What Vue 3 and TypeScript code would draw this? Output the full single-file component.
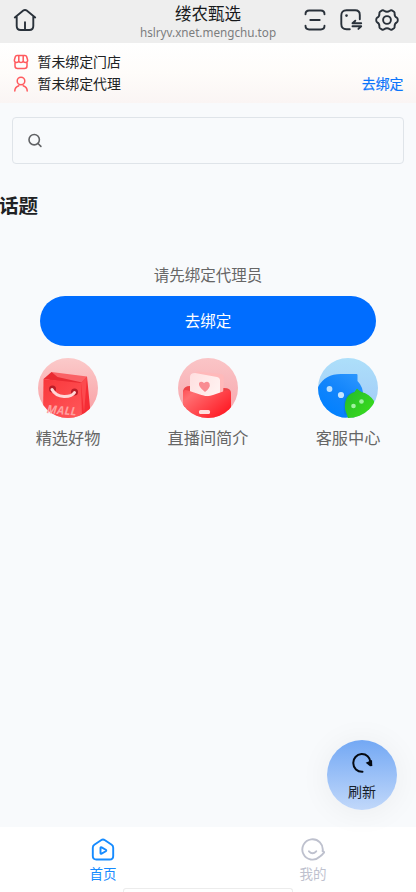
<script setup lang="ts">
interface Feature {
  id: 'mall' | 'live' | 'service'
  label: string
}

const features: Feature[] = [
  { id: 'mall', label: '精选好物' },
  { id: 'live', label: '直播间简介' },
  { id: 'service', label: '客服中心' },
]
</script>

<template>
  <div class="page">
    <header class="browser-bar">
      <svg class="home" viewBox="0 0 24 24" width="24" height="24">
        <path d="M1.800 9.400 10.300 2.600q1.700-1.300 3.400 0l8.500 6.800M3.700 8.300v9.700q0 4 4 4h8.600q4 0 4-4V8.300M12 14.200v7.400" />
      </svg>
      <div class="site">
        <div class="site-title">缕农甄选</div>
        <div class="site-url">hslryv.xnet.mengchu.top</div>
      </div>
      <div class="tools">
        <svg viewBox="0 0 24 24" width="24" height="24">
          <path d="M2.500 6.200q0-3.700 3.700-3.700h11.600q3.700 0 3.700 3.700M2.500 17.800q0 3.700 3.700 3.700h11.600q3.700 0 3.700-3.700M7.300 12h9.400" />
        </svg>
        <svg viewBox="0 0 24 24" width="24" height="24">
          <path d="M10.800 21.200H7.500q-5.200 0-5.200-5.200V7.500q0-5.200 5.200-5.200h8.700q4.600 0 4.600 4.600v4.300M22.200 15.200h-8.700l2.800-2.500M13.500 18.200h8.700l-2.800 2.700" />
          <circle class="dot" cx="7.500" cy="7.600" r="1.300" />
        </svg>
        <svg viewBox="0 0 24 24" width="24" height="24">
          <path d="M7.100 2.400Q8.200 2 9.100 2.800q2.900 2 5.800 0 .9-.8 2-.4l2.100 1.300q.8.700.6 1.800-.2 3 2.200 4.200 1 .5 1 2.300t-1 2.300q-2.400 1.200-2.200 4.200.2 1.100-.6 1.800l-2.100 1.300q-1.100.4-2-.4-2.900-2-5.800 0-.9.800-2 .4L5 20.300q-.8-.7-.6-1.800.2-3-2.200-4.200-1-.5-1-2.300t1-2.300Q4.600 8.500 4.400 5.500 4.200 4.400 5 3.700Z" />
          <circle cx="12" cy="12" r="3.900" />
        </svg>
      </div>
    </header>

    <section class="binding">
      <div class="binding-row">
        <svg viewBox="0 0 16 16" width="16" height="16">
          <path d="M4 1.500h8q1.300 0 1.700 1.200L14.600 6v1q-.3 1.500-2.200 1.500T10.200 7q-.4 1.500-2.200 1.500T5.800 7q-.4 1.500-2.200 1.500T1.400 7V6l.9-3.300Q2.700 1.500 4 1.500ZM5.800 7V1.700M10.200 7V1.700M2 8.400V12q0 2.500 2.500 2.500h7Q14 14.500 14 12V8.400" />
        </svg>
        <span>暂未绑定门店</span>
      </div>
      <div class="binding-row">
        <svg viewBox="0 0 16 16" width="16" height="16">
          <circle cx="8" cy="5" r="3.800" />
          <path d="M1.800 15q0-3.900 4-5.200M14.200 15q0-3.900-4-5.200" />
        </svg>
        <span>暂未绑定代理</span>
        <a class="bind-link">去绑定</a>
      </div>
    </section>

    <main class="content">
      <div class="search">
        <svg viewBox="0 0 16 16" width="16" height="16">
          <circle cx="7.200" cy="6.700" r="5.200" />
          <path d="m11 10.500 2.900 2.900" />
        </svg>
      </div>
      <h2 class="topic">话题</h2>
      <p class="prompt">请先绑定代理员</p>
      <button class="bind-button">去绑定</button>

      <nav class="features">
        <div v-for="item in features" :key="item.id" class="feature">
          <svg v-if="item.id === 'mall'" class="feature-icon" viewBox="0 0 60 60" width="60" height="60">
            <defs>
              <linearGradient id="mall-bg" x2="0" y2="1"><stop stop-color="#fbcaca" /><stop offset="1" stop-color="#f99ca1" /></linearGradient>
              <linearGradient id="bag" x1="0" x2=".8" y2="1"><stop stop-color="#f9373b" /><stop offset="1" stop-color="#ff5558" /></linearGradient>
              <clipPath id="mall-clip"><circle cx="30" cy="30" r="30" /></clipPath>
            </defs>
            <g clip-path="url(#mall-clip)">
              <path fill="url(#mall-bg)" d="M0 0h60v60H0z" />
              <path fill="#fa6266" d="m13.500 14 35.500 4.500-5 6-31-2.500z" />
              <path fill="#e92b32" d="m13.500 14 6 5 24.500 5.500-1 2L5.500 21z" />
              <path fill="#f52d35" d="m49 18.500 3.500 36L43 60V25z" />
              <path fill="#fc4a4e" d="m49 18.500-6 6.500 3 30z" />
              <path fill="url(#bag)" d="m5.500 21 37.500 4 1 35H5z" />
              <circle cx="14.500" cy="31" r="3.500" fill="#b91d28" />
              <circle cx="36.500" cy="34" r="3.500" fill="#b91d28" />
              <path d="M14 31.500q3.500 6.500 12 7 8 .2 10.500-4" fill="none" stroke="#ffd7d7" stroke-width="3" stroke-linecap="round" />
            </g>
            <text class="mall-word" x="8.500" y="55" transform="rotate(5 8.500 55)">MALL</text>
          </svg>

          <svg v-else-if="item.id === 'live'" class="feature-icon" viewBox="0 0 60 60" width="60" height="60">
            <defs>
              <linearGradient id="live-bg" x2="0" y2="1"><stop stop-color="#fac5c7" /><stop offset="1" stop-color="#f7a4aa" /></linearGradient>
              <linearGradient id="envelope" x1="0" y1="0" x2="1" y2=".7"><stop stop-color="#ff5258" /><stop offset=".2" stop-color="#ff6d70" /><stop offset="1" stop-color="#ff1b25" /></linearGradient>
              <linearGradient id="letter" x2="1" y2=".5"><stop stop-color="#ffdfdf" /><stop offset="1" stop-color="#fff1f0" /></linearGradient>
              <clipPath id="live-clip"><circle cx="30" cy="30" r="30" /></clipPath>
            </defs>
            <g clip-path="url(#live-clip)">
              <path fill="url(#live-bg)" d="M0 0h60v60H0z" />
              <path fill="#ed4448" d="M5 33q1-5 7-5l34 2q7 0 7 5v14H6z" />
              <path fill="#ffb9ba" d="m20 13.500 23 2.500q3 .5 3 3.500l-1 17-29-5V17q0-3 4-3.500" />
              <path fill="url(#letter)" d="m17 15 22 4q3 .5 3 3.500V40L12 36V19q0-4 5-4" />
              <path fill="#f98c92" d="M27 34q-7-5.500-6-9 2-2.500 5 0 4-2.500 5.500 .5 1.500 4-4.500 8.500" />
              <path fill="url(#envelope)" d="M5 35q0-4 5-2.500l15 5q5 1.500 10-.5l13-4.500q5-1 5 4v20L38 60H17L5 52z" />
              <rect x="21" y="52" width="11" height="4" rx="1.500" fill="#ffdedd" />
            </g>
          </svg>

          <svg v-else class="feature-icon" viewBox="0 0 60 60" width="60" height="60">
            <defs>
              <linearGradient id="service-bg" x2="0" y2="1"><stop stop-color="#addffa" /><stop offset="1" stop-color="#a1c9f7" /></linearGradient>
              <linearGradient id="blue-face" x1="1" y1="0" x2=".3" y2="1"><stop stop-color="#2e98ff" /><stop offset=".5" stop-color="#1385fb" /><stop offset="1" stop-color="#0080ff" /></linearGradient>
              <linearGradient id="green-face" x1="0" x2="1" y2=".8"><stop stop-color="#23b92b" /><stop offset="1" stop-color="#3bdd1c" /></linearGradient>
              <clipPath id="service-clip"><circle cx="30" cy="30" r="30" /></clipPath>
            </defs>
            <g clip-path="url(#service-clip)">
              <path fill="url(#service-bg)" d="M0 0h60v60H0z" />
              <path fill="url(#blue-face)" d="M0 29Q7 16 23 16h15.500q1 0 1 1v6q6 6 5.500 15 0 22-23 22H0z" />
              <path fill="#0874d4" d="M26.500 56c-3-13 2-21 9-22l8 1-8 25z" opacity=".55" />
              <path fill="url(#green-face)" d="M27 51q-1-14 9.500-17l2-3q1-1 2 1l3 2q8 2 12.500 9v17H30z" />
              <circle cx="11.500" cy="31" r="2.900" fill="#b9dfff" />
              <circle cx="23" cy="37" r="3.100" fill="#c5e5ff" />
              <circle cx="43.500" cy="43.500" r="2.300" fill="#a1f2a1" />
              <circle cx="35.500" cy="48" r="2.300" fill="#a1f2a1" />
            </g>
          </svg>
          <span>{{ item.label }}</span>
        </div>
      </nav>
    </main>

    <footer class="tabbar">
      <div class="tab active">
        <svg viewBox="0 0 24 24" width="24" height="24">
          <path d="M3.300 6.700 10 2.200q2-1.300 4 0l6.700 4.500q1.500 1 1.500 3V18q0 3.500-3.500 3.500H5.300Q1.800 21.500 1.800 18V9.700q0-2 1.500-3ZM9.500 10v5q0 1.200 1.100.6l4.200-2.400q1-.7 0-1.400l-4.200-2.400q-1.100-.6-1.100.6Z" />
        </svg>
        <span>首页</span>
      </div>
      <div class="tab">
        <svg viewBox="0 0 24 24" width="24" height="24">
          <path d="M21.600 13.200A10.200 10.200 0 1 0 18.600 18.800Q20.600 17.500 23.200 14.300L21.600 12.800M8 13.300q3.500 3.800 7.200 0" />
        </svg>
        <span>我的</span>
      </div>
      <div class="handle"></div>
    </footer>

    <button class="refresh">
      <svg viewBox="0 0 22 22" width="22" height="22">
        <path d="M11.500 19.800C6.300 20 2.300 16.200 2.300 11.200a8.600 8.600 0 0 1 17.200-1" />
        <path class="arrow" d="m14.700 10.800 6.300-2.800.3 6-2.300.2z" />
      </svg>
      <span>刷新</span>
    </button>
  </div>
</template>

<style>
body {
  margin: 0;
  overflow: hidden;
}
</style>

<style scoped>
.page {
  position: relative;
  display: flex;
  flex-direction: column;
  width: 416px;
  height: 892px;
  overflow: hidden;
  background: #f8fafc;
  color: #202224;
  font-family: "Noto Sans", "Noto Sans CJK SC", sans-serif;
}
svg {
  display: block;
  flex-shrink: 0;
  fill: none;
  stroke-linecap: round;
  stroke-linejoin: round;
}
button {
  border: 0;
  padding: 0;
  font: inherit;
}
.browser-bar {
  display: grid;
  grid-template-columns: 1fr auto 1fr;
  height: 43px;
  box-sizing: border-box;
  padding: 0 17px 0 13px;
  background: #eee;
}
.browser-bar svg {
  margin-top: 8px;
  stroke: #29313a;
  stroke-width: 1.9;
}
.browser-bar .dot {
  fill: #29313a;
  stroke: none;
}
.site {
  padding-left: 4px;
  text-align: center;
}
.site-title {
  height: 24px;
  line-height: 27px;
  font-size: 16.5px;
  color: #17191b;
}
.site-url {
  line-height: 16px;
  font-size: 11.7px;
  color: #7c7d7e;
}
.tools {
  display: flex;
  justify-content: flex-end;
  gap: 12px;
}
.binding {
  height: 60px;
  box-sizing: border-box;
  padding: 8px 12.5px 0;
  background: linear-gradient(#fff, #fefcfa 50%, #faf5f4);
}
.binding-row {
  display: flex;
  align-items: center;
  height: 22px;
  font-size: 13.9px;
  line-height: 22px;
}
.binding-row svg {
  margin-right: 9px;
  stroke: #ff5a5e;
  stroke-width: 1.5;
}
.bind-link {
  margin-left: auto;
  color: #0b75fb;
  -webkit-text-stroke: 0.2px currentColor;
}
.content {
  flex: 1;
}
.search {
  display: flex;
  align-items: center;
  box-sizing: border-box;
  height: 47px;
  margin: 14px 12px 0;
  padding-left: 14px;
  border: 1px solid #dfe4e9;
  border-radius: 4px;
}
.search svg {
  stroke: #606265;
  stroke-width: 1.6;
}
.topic {
  margin: 27px 0 0 -1px;
  font-size: 19.5px;
  line-height: 30px;
}
.prompt {
  margin: 43px 0 0;
  font-size: 15.5px;
  line-height: 22px;
  text-align: center;
  color: #666;
}
.bind-button {
  display: block;
  width: 336px;
  height: 50px;
  margin: 10px auto 0;
  border-radius: 25px;
  background: #006dff;
  color: #fff;
  font-size: 15.5px;
  line-height: 48px;
}
.features {
  display: grid;
  grid-template-columns: repeat(3, 140px);
  justify-content: center;
  margin-top: 12px;
}
.feature {
  display: flex;
  flex-direction: column;
  align-items: center;
  gap: 8px;
  font-size: 16.2px;
  line-height: 24px;
  color: #666;
}
.mall-word {
  fill: #ffa0a0;
  font: italic bold 11.5px "Noto Sans", sans-serif;
  letter-spacing: 0.2px;
}
.tabbar {
  position: relative;
  display: grid;
  grid-template-columns: repeat(2, 206px);
  column-gap: 4px;
  height: 65px;
  background: #fff;
}
.tab {
  display: flex;
  flex-direction: column;
  align-items: center;
  padding-top: 11px;
  color: #bec1ce;
  font-size: 13.5px;
  line-height: 20px;
}
.tab svg {
  margin-bottom: 2px;
  stroke: currentColor;
  stroke-width: 1.9;
}
.tab.active {
  color: #168bff;
}
.handle {
  position: absolute;
  left: 123px;
  bottom: 0;
  width: 170px;
  height: 4px;
  box-sizing: border-box;
  border: 1px solid #ececec;
  border-bottom: 0;
  border-radius: 3px 3px 0 0;
}
.refresh {
  position: absolute;
  right: 19px;
  bottom: 82px;
  display: flex;
  flex-direction: column;
  align-items: center;
  width: 70px;
  height: 70px;
  padding-top: 12px;
  border-radius: 50%;
  background: linear-gradient(#73a8f4, #c1d8fa);
  box-shadow: 0 2px 32px rgba(0, 0, 0, 0.06);
  color: #17202b;
  font-size: 14px;
  line-height: 20px;
}
.refresh svg {
  margin-bottom: 8px;
  stroke: #050a12;
  stroke-width: 2;
}
.refresh .arrow {
  fill: #050a12;
  stroke: none;
}
</style>
